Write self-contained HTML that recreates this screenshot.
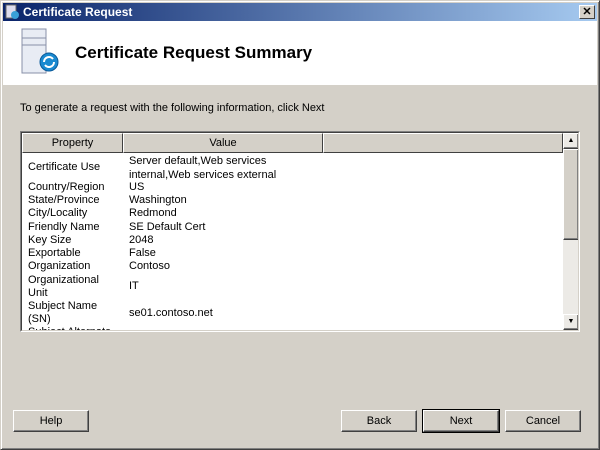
<!DOCTYPE html>
<html><head><style>
*{margin:0;padding:0;box-sizing:border-box}
body{width:600px;height:450px;overflow:hidden;background:#d4d0c8;font-family:Tahoma,"Liberation Sans",sans-serif;font-size:11px;color:#000;position:relative}
.abs{position:absolute}
.win{left:0;top:0;width:600px;height:450px;border:1px solid #d4d0c8;border-right-color:#404040;border-bottom-color:#404040;box-shadow:inset 1px 1px 0 #fff,inset -1px -1px 0 #808080}
.title{left:3px;top:3px;width:594px;height:18px;background:linear-gradient(90deg,#0a246a,#a6caf0);color:#fff;font-weight:bold;font-size:12px;line-height:18px;padding-left:20px}
.xb{right:5px;top:5px;width:16px;height:14px;background:#d4d0c8;border:1px solid;border-color:#fff #404040 #404040 #fff;font:bold 11px "Liberation Sans";text-align:center;line-height:12px;color:#000}
.hdr{left:3px;top:21px;width:594px;height:64px;background:#fff}
.h1{left:75px;top:43px;font-size:17px;font-weight:bold;font-family:"Liberation Sans",sans-serif}
.btn{width:76px;height:22px;border:1px solid;border-color:#fff #404040 #404040 #fff;box-shadow:inset -1px -1px 0 #808080;text-align:center;line-height:20px;font-size:11px}
.list{left:20px;top:131px;width:560px;height:201px;border:1px solid;border-color:#808080 #fff #fff #808080;background:#fff}
.list .in{position:absolute;left:0;top:0;width:558px;height:199px;border:1px solid;border-color:#404040 #d4d0c8 #d4d0c8 #404040;overflow:hidden}
.th{top:0;height:20px;background:#d4d0c8;border:1px solid;border-color:#fff #404040 #404040 #fff;text-align:center;line-height:18px}
.row{position:absolute;left:6px}
.v{position:absolute;left:107px}
</style></head><body>
<div class="abs win"></div>
<div class="abs title">Certificate Request</div>
<svg class="abs" style="left:5px;top:4px" width="15" height="16"><rect x="1" y="1" width="10" height="13" fill="#dde" stroke="#666"/><circle cx="10" cy="11" r="4" fill="#3aa0d8"/></svg>
<div class="abs xb">✕</div>
<div class="abs hdr"></div>
<svg class="abs" style="left:20px;top:28px" width="42" height="50"><rect x="2" y="1" width="24" height="44" fill="#e8ecf4" stroke="#8890a8"/><line x1="2" y1="10" x2="26" y2="10" stroke="#8890a8"/><line x1="2" y1="17" x2="26" y2="17" stroke="#8890a8"/><circle cx="29" cy="34" r="9" fill="#1a8ad0" stroke="#0a5a9a"/><path d="M24 34a5 5 0 0 1 9-3M34 34a5 5 0 0 1-9 3" stroke="#fff" stroke-width="2" fill="none"/></svg>
<div class="abs h1">Certificate Request Summary</div>
<div class="abs" style="left:20px;top:102px">To generate a request with the following information, click Next</div>
<div class="abs list"><div class="in">
<div class="abs th" style="left:0;width:101px">Property</div>
<div class="abs th" style="left:101px;width:200px">Value</div>
<div class="abs th" style="left:301px;width:240px"></div>
<div class="row" style="top:28px">Certificate Use</div>
<div class="v" style="top:21px;line-height:14px">Server default,Web services<br>internal,Web services external</div>
<div class="row" style="top:48px">Country/Region</div><div class="v" style="top:48px">US</div>
<div class="row" style="top:61px">State/Province</div><div class="v" style="top:61px">Washington</div>
<div class="row" style="top:74px">City/Locality</div><div class="v" style="top:74px">Redmond</div>
<div class="row" style="top:88px">Friendly Name</div><div class="v" style="top:88px">SE Default Cert</div>
<div class="row" style="top:101px">Key Size</div><div class="v" style="top:101px">2048</div>
<div class="row" style="top:114px">Exportable</div><div class="v" style="top:114px">False</div>
<div class="row" style="top:127px">Organization</div><div class="v" style="top:127px">Contoso</div>
<div class="row" style="top:141px;line-height:13px">Organizational<br>Unit</div><div class="v" style="top:147px">IT</div>
<div class="row" style="top:167px;line-height:13px">Subject Name<br>(SN)</div><div class="v" style="top:174px">se01.contoso.net</div>
<div class="row" style="top:193px">Subject Alternate</div>
<div class="abs" style="left:541px;top:0;width:16px;height:197px;background:#eceae6"></div>
<div class="abs btn" style="left:541px;top:0;width:16px;height:16px;line-height:14px;font-size:7px">▲</div>
<div class="abs btn" style="left:541px;top:16px;width:16px;height:91px;background:#d4d0c8"></div>
<div class="abs btn" style="left:541px;top:181px;width:16px;height:16px;line-height:14px;font-size:7px">▼</div>
</div></div>
<div class="abs btn" style="left:13px;top:410px">Help</div>
<div class="abs btn" style="left:341px;top:410px">Back</div>
<div class="abs btn" style="left:423px;top:410px;outline:1px solid #000">Next</div>
<div class="abs btn" style="left:505px;top:410px">Cancel</div>
</body></html>
